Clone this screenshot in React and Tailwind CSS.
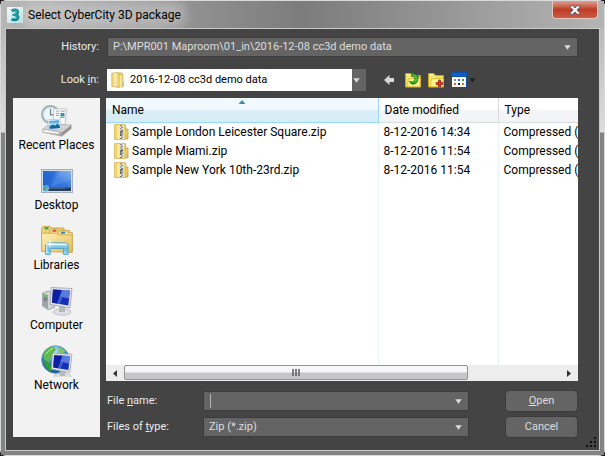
import React from "react";

const files = [
  { name: "Sample London Leicester Square.zip", date: "8-12-2016 14:34" },
  { name: "Sample Miami.zip", date: "8-12-2016 11:54" },
  { name: "Sample New York 10th-23rd.zip", date: "8-12-2016 11:54" },
];

function AppLogo() {
  return (
    <svg width="16" height="16" viewBox="0 0 16 16" aria-hidden="true" className="shrink-0">
      <defs>
        <linearGradient id="logoBg" x1="0" y1="0" x2="1" y2="1">
          <stop offset="0" stopColor="#f4fbfb" />
          <stop offset="1" stopColor="#b9dcde" />
        </linearGradient>
      </defs>
      <rect width="16" height="16" fill="url(#logoBg)" />
      <path d="M4.6 4 Q8 2.200 10.200 3.800 Q11.600 5.800 8.200 7.700 Q12.200 9 10.600 11.500 Q8 13.600 4.600 12" fill="none" stroke="#0c7f88" strokeWidth="3" />
      <path d="M5 3.700 Q8 2.200 9.800 3.800 Q11 5.600 7 7.400 Q11.400 8.600 10 11 Q8 12.600 5 11.500" fill="none" stroke="#27b0b2" strokeWidth="1.200" />
    </svg>
  );
}

function FolderIcon() {
  return (
    <svg width="14" height="16" viewBox="0 0 14 16" aria-hidden="true" className="shrink-0">
      <defs>
        <linearGradient id="folderFill" x1="0" y1="0" x2="1" y2="0">
          <stop offset="0" stopColor="#e9cf72" />
          <stop offset="0.5" stopColor="#fbf0b0" />
          <stop offset="1" stopColor="#e4c35c" />
        </linearGradient>
      </defs>
      <path d="M5 1h6l1 2v12H5z" fill="#e8cb69" stroke="#c9a545" strokeWidth=".6" />
      <path d="M.8 1.2 7.6.6 8.4 2v13.4L.8 14.4z" fill="url(#folderFill)" stroke="#d0ae4d" strokeWidth=".7" />
      <path d="M8.4 3.4h2.8v10.8l-2.8 1.2z" fill="#f6e394" />
      <path d="M11.6 10v4h1.5v-4z" fill="#8fc4e4" />
    </svg>
  );
}

function ZipIcon() {
  return (
    <svg width="15" height="16" viewBox="0 0 15 16" aria-hidden="true" className="shrink-0">
      <path d="M8 1.4h3.4V5H14v10H8z" fill="#edcf68" stroke="#c79f3a" strokeWidth=".8" />
      <path d="M.6.6h10.6v14.8H.6z" fill="#fbe897" stroke="#cfab48" strokeWidth=".8" />
      <path d="M1.2 1.2h2v13.6h-2z" fill="#f1d36f" />
      <path d="M9.2 4.8h1.9v9.8H9.2z" fill="#f0d271" />
      <rect x="5.6" y="1" width="3.6" height="14" fill="#e4e4e1" />
      <path d="M6 1.7h1.8M7.2 3.3H9M6 4.9h1.8M7.2 6.5H9M6 11.5h1.8M7.2 13.2H9M6 14.5h1.8" stroke="#6a6f76" strokeWidth="1" />
      <rect x="6.2" y="7" width="2.3" height="4.4" fill="#4f5660" />
      <rect x="7" y="8.7" width=".8" height="1.8" fill="#d8d8d8" />
      <rect x="12.8" y="11" width="1.2" height="3" fill="#80bfe0" />
    </svg>
  );
}

function Triangle({ color = "#dcdcdc" }) {
  return (
    <svg width="7" height="5" viewBox="0 0 7 5" aria-hidden="true" className="shrink-0">
      <path d="M.3.2h6.4L3.5 4.8z" fill={color} />
    </svg>
  );
}

function BackIcon() {
  return (
    <svg width="10" height="10" viewBox="0 0 10 10" aria-hidden="true">
      <path d="M5.5 0v3H10v4H5.5v3L0 5z" fill="#d8d8d8" />
    </svg>
  );
}

function YellowFolder() {
  return (
    <g>
      <path d="M.5 15V1.500h5.500l1 2H15.500V15z" fill="#f8e061" stroke="#c9a417" />
      <path d="M2 5.500h4.200l1.300-2M1.500 2.700H5" fill="none" stroke="#fff8b8" />
      <path d="M1.800 14.700 3.800 6.500h11.400v8.200z" fill="#fff18b" stroke="#d6b32d" strokeWidth=".7" />
    </g>
  );
}

function UpFolderIcon() {
  return (
    <svg width="16" height="16" viewBox="0 0 16 16" aria-hidden="true">
      <YellowFolder />
      <path d="M4.500 9.400Q5.600 12.800 9 12.200Q13.600 11 12.600 4.800h1.600L9.300 2.800 7.300.6 5.800.8 7.600 3.200 6.200 4.200 9.600 4.400Q10.400 8.600 8.600 9.600Q6.600 10.400 4.500 9.400z" fill="#35ae2c" stroke="#13731a" strokeWidth=".8" />
      <path d="M8.600 2.600Q12.600 4.600 10.600 9.400" fill="none" stroke="#5fc945" strokeWidth="1.200" />
    </svg>
  );
}

function NewFolderIcon() {
  return (
    <svg width="16" height="16" viewBox="0 0 16 16" aria-hidden="true">
      <YellowFolder />
      <path d="M11.500 8v7M8 11.500h7" stroke="#7a1712" strokeWidth="2.600" />
      <path d="M11.500 7.500v8M7.500 11.500h8" stroke="#f0301d" strokeWidth="1.300" />
    </svg>
  );
}

function ViewIcon() {
  return (
    <svg width="16" height="16" viewBox="0 0 16 16" aria-hidden="true">
      <rect width="16" height="16" fill="#0a4fa5" />
      <rect x="1" y="1" width="14" height="3" fill="#0d63cb" />
      <path d="M10 2.500h1M12 2.500h1M14 2.500h1" stroke="#0a3b82" />
      <rect x="1" y="5" width="14" height="10" fill="#fff" />
      <path d="M3 7h2v2H3z" fill="#8588b5" />
      <path d="M7 7h2v2H7z" fill="#2469d1" />
      <path d="M11 7h2v2h-2z" fill="#29a12c" />
      <path d="M3 11h2v2H3z" fill="#ee5c2b" />
      <path d="M7 11h2v2H7z" fill="#1a2291" />
      <path d="M11 11h2v2h-2z" fill="#c58a1d" />
    </svg>
  );
}

function RecentIcon() {
  return (
    <svg width="32" height="32" viewBox="0 0 32 32" aria-hidden="true">
      <defs>
        <linearGradient id="trayFill" x1="0" y1="0" x2="1" y2="1">
          <stop offset="0" stopColor="#f6f6f6" />
          <stop offset="1" stopColor="#9a9a9a" />
        </linearGradient>
        <linearGradient id="photoFill" x1="0" y1="0" x2="0" y2="1">
          <stop offset="0" stopColor="#2a8fdd" />
          <stop offset=".5" stopColor="#b3e1f5" />
          <stop offset="1" stopColor="#1b6fae" />
        </linearGradient>
      </defs>
      <circle cx="9.5" cy="9.5" r="8.6" fill="#dce8ee" stroke="#98aab4" strokeWidth="1.6" />
      <circle cx="9.5" cy="9.5" r="6.7" fill="#eef7fa" stroke="#b9c9d2" strokeWidth=".6" />
      <path d="M9.5 4v5.8h5" fill="none" stroke="#6b7f8c" strokeWidth="1.2" />
      <path d="M13 3.5 25.6 4 24 20 12 19z" fill="#fafafa" stroke="#b1b1b1" strokeWidth=".7" />
      <path d="M15 6h3M19.5 6.2h4.3M15 8.4h3M15 10.5h3M19 12.5h4.5" stroke="#9ba5ac" />
      <path d="M19.5 8h4v3.5h-4z" fill="#3a93ad" />
      <path d="M2 24 9 18.500 30.500 20 21 28z" fill="#d4d4d4" stroke="#a5a5a5" strokeWidth=".6" />
      <path d="M6.5 15 19 14 20 24 8 25z" fill="#fff" stroke="#9badb7" strokeWidth=".6" />
      <path d="M7.7 16 18 15.2l.9 7.8-10.1.8z" fill="url(#photoFill)" />
      <path d="m8.6 21.5 3.4-2 2.2 1.3 2.3-2.3 2.2 2.2.2 2.3-10.1.8z" fill="#126699" />
      <path d="M1.5 24 21 27.300v4L1.500 27.300z" fill="url(#trayFill)" stroke="#a3a3a3" strokeWidth=".6" />
      <path d="m21 27.300 9.500-7.300v3.800L21 31.300z" fill="#969696" />
      <path d="m4 25.800 14 2.400" stroke="#fff" strokeWidth="1.2" />
    </svg>
  );
}

function DesktopIcon() {
  return (
    <svg width="32" height="32" viewBox="0 0 32 32" aria-hidden="true">
      <defs>
        <linearGradient id="deskFill" x1="0" y1="1" x2="1" y2="0">
          <stop offset="0" stopColor="#1f5fce" />
          <stop offset=".55" stopColor="#3577de" />
          <stop offset="1" stopColor="#7aabea" />
        </linearGradient>
      </defs>
      <rect x=".5" y="4.5" width="31" height="23" fill="#d4dce6" stroke="#a3afbd" />
      <rect x="2" y="6" width="28" height="20" fill="url(#deskFill)" />
      <path d="M2 6h14L5 22H2z" fill="#1659c8" opacity=".4" />
      <path d="M19 6h11v9L9 22z" fill="#b2d6ff" opacity=".15" />
      <rect x="2" y="22.5" width="28" height="3.5" fill="#263d5d" />
      <path d="M8 23h16" stroke="#60799b" />
      <circle cx="4.8" cy="23.4" r="2.9" fill="#1796cf" stroke="#b3e2f2" strokeWidth=".6" />
      <path d="M3.2 22h1.5v1.5H3.2z" fill="#ef6f31" />
      <path d="M5 22h1.5v1.5H5z" fill="#8acb3a" />
      <path d="M5 23.7h1.5v1.4H5z" fill="#f3cb35" />
    </svg>
  );
}

function LibrariesIcon() {
  return (
    <svg width="32" height="32" viewBox="0 0 32 32" aria-hidden="true">
      <defs>
        <linearGradient id="libFill" x1="0" y1="0" x2="1" y2="1">
          <stop offset="0" stopColor="#fff3b8" />
          <stop offset="1" stopColor="#e3bb55" />
        </linearGradient>
        <linearGradient id="libStand" x1="0" y1="0" x2="0" y2="1">
          <stop offset="0" stopColor="#c8edfb" />
          <stop offset=".5" stopColor="#62b8df" />
          <stop offset="1" stopColor="#a6def4" />
        </linearGradient>
      </defs>
      <path d="M.7 26V3l1.3-1.7h7L10.3 3H23v22z" fill="#efd379" stroke="#c39e46" strokeWidth=".8" />
      <rect x="3.5" y="2.3" width="4" height="2" fill="#20a532" />
      <path d="M9 25V5.2l1.2-1.6h7l1.3 1.8h10V25z" fill="#f4dd8d" stroke="#c39e46" strokeWidth=".8" />
      <rect x="11.5" y="4.7" width="4" height="2" fill="#d8482b" />
      <path d="M17 26V7.2l1.2-1.6h7.2l1.3 1.8h4.6V27z" fill="#f6df8d" stroke="#c39e46" strokeWidth=".8" />
      <rect x="20" y="6.7" width="4" height="2" fill="#258bc7" />
      <path d="M.7 8.2h15l1.6 1.7h14v17.5L.7 26.5z" fill="url(#libFill)" stroke="#c9a54d" strokeWidth=".8" />
      <path d="M4.5 29.500V19.700l2-2h18.700l2 2v9.800h-4.800v-6H9.300v6z" fill="url(#libStand)" stroke="#4a9ec6" strokeWidth=".8" />
      <path d="M6 19.5h19.5M5.8 21v7" stroke="#e9faff" />
      <path d="m9 13 .8 5 5.2.8-5.2.8-.8 5-.8-5-5.2-.8 5.2-.8z" fill="#fff" opacity=".85" />
    </svg>
  );
}

function MonitorShapes() {
  return (
    <g>
      <ellipse cx="21" cy="27" rx="9" ry="3.200" fill="#dfe1e3" stroke="#b1b5b9" strokeWidth=".7" />
      <path d="m18 20 6 1v6h-6z" fill="#b4b9be" />
      <path d="M10.2 2.5 31 3.5 29 23 9 19.5z" fill="#e2e4e6" stroke="#9d9fa3" strokeWidth=".8" />
      <path d="m12 4.6 17 .9-1.7 15-16.4-2.8z" fill="#1630b8" />
      <path d="m12 4.6 9 .5-5 13.4-5-.9z" fill="#0b1a98" opacity=".75" />
      <path d="m21 5.1 8 .4-1 8-9-2z" fill="#83a4f1" opacity=".65" />
      <path d="m21 5.1 3 .1-5 13.8-3-.5z" fill="#4e78df" opacity=".65" />
    </g>
  );
}

function ComputerIcon() {
  return (
    <svg width="32" height="32" viewBox="0 0 32 32" aria-hidden="true">
      <path d="M1.5 8 7.5 6l6 2v14.5L7 24.7 1.5 21z" fill="#d2d5d7" stroke="#94989b" strokeWidth=".8" />
      <path d="M2 8.5 7 10v14l-5-3.3z" fill="#9ea3a7" />
      <path d="M3 13h3M3 15h3" stroke="#5c6368" />
      <rect x="3" y="9.5" width="2.4" height="2" fill="#4ce23f" />
      <MonitorShapes />
    </svg>
  );
}

function NetworkIcon() {
  return (
    <svg width="32" height="32" viewBox="0 0 32 32" aria-hidden="true">
      <defs>
        <radialGradient id="globeFill" cx=".45" cy=".2" r=".85">
          <stop offset="0" stopColor="#c4e9f8" />
          <stop offset=".5" stopColor="#2f8cc9" />
          <stop offset="1" stopColor="#0b4c99" />
        </radialGradient>
      </defs>
      <circle cx="14.5" cy="14.5" r="13.8" fill="url(#globeFill)" stroke="#5c8ead" strokeWidth=".8" />
      <path d="M3 8Q7 2 13 1.6L15 5l-3 3 1 4-4 1-1 5-4-3-2-3z" fill="#61b84b" />
      <path d="m2 16 6 2 3 5-1 4-4-3z" fill="#339e2e" />
      <path d="m18 2 7 4-4 3-4-2z" fill="#82c66a" />
      <path d="M4.5 9.5Q8 5 12 3" fill="none" stroke="#c5ed9f" />
      <g transform="translate(2 6) scale(.93)">
        <MonitorShapes />
      </g>
    </svg>
  );
}

const places = [
  { label: "Recent Places", Icon: RecentIcon },
  { label: "Desktop", Icon: DesktopIcon },
  { label: "Libraries", Icon: LibrariesIcon },
  { label: "Computer", Icon: ComputerIcon },
  { label: "Network", Icon: NetworkIcon },
];

const field =
  "flex h-5 items-center border border-[#3b3b3b] bg-[#646464] text-[#dedede]";
const bareSelect =
  "h-full min-w-0 flex-1 appearance-none bg-transparent outline-none";
const pushButton =
  "h-[22px] w-full rounded-sm border border-[#3b3b3b] bg-[#646464] text-[#dedede]";

function TitleBar() {
  return (
    <header className="flex h-[27px] items-start bg-linear-to-r from-[#b6b6b6] via-[#7c7c7c] to-[#b4b4b4] pr-1.5 pl-1.5">
      <div className="flex h-[27px] flex-1 items-center gap-[5px]">
        <AppLogo />
        <h1 className="rounded-full bg-white/25 text-[12px] leading-4 text-black shadow-[0_0_10px_6px_rgba(255,255,255,0.25)]">
          Select CyberCity 3D package
        </h1>
      </div>
      <button
        type="button"
        aria-label="Close"
        className="flex h-[18px] w-[46px] items-center justify-center rounded-b-[4px] border border-t-0 border-[#e5c8c3] bg-linear-to-b from-[#dd9f93] via-[#bd3b25] via-50% to-[#cc5b43]"
      >
        <svg width="12" height="10" viewBox="0 0 12 10" aria-hidden="true">
          <path d="M1 .7h3L6 3l2-2.3h3v1L8 5l3 3.3v1H8L6 7 4 9.300H1v-1L4 5 1 1.700z" fill="#f5f5f5" stroke="#525563" strokeWidth=".9" />
        </svg>
      </button>
    </header>
  );
}

function FileList() {
  return (
    <section className="flex min-w-0 flex-1 flex-col overflow-hidden bg-white text-[12px] text-black">
      <table className="w-full flex-1 table-fixed border-collapse text-left">
        <colgroup>
          <col />
          <col className="w-[120px]" />
          <col className="w-[80px]" />
        </colgroup>
        <thead>
          <tr className="h-6">
            <th className="relative border-r border-b border-[#96d9f9] bg-linear-to-b from-[#f2f9fc] from-45% to-[#d8ecf6] to-55% p-0 pl-1.5 font-normal">
              Name
              <svg width="7" height="4" viewBox="0 0 7 4" aria-hidden="true" className="absolute top-0.5 left-1/2 -translate-x-1/2">
                <path d="M0 4 3.500 0 7 4z" fill="#4a88a8" />
              </svg>
            </th>
            <th className="border-r border-b border-[#d8dce0] bg-linear-to-b from-white from-45% to-[#f3f4f6] to-55% p-0 pl-1.5 font-normal">
              Date modified
            </th>
            <th className="border-b border-[#d8dce0] bg-linear-to-b from-white from-45% to-[#f3f4f6] to-55% p-0 pl-1.5 font-normal">
              Type
            </th>
          </tr>
        </thead>
        <tbody>
          {files.map((f) => (
            <tr key={f.name} className="h-[19px]">
              <td className="border-r border-[#edf3fa] p-0 pl-2">
                <span className="flex items-center gap-[3px] whitespace-nowrap">
                  <ZipIcon />
                  {f.name}
                </span>
              </td>
              <td className="border-r border-[#edf3fa] p-0 pl-[5px] whitespace-nowrap">{f.date}</td>
              <td className="overflow-hidden p-0 pl-[5px] whitespace-nowrap">Compressed (</td>
            </tr>
          ))}
          <tr className="h-[184px]">
            <td className="border-r border-[#edf3fa]" />
            <td className="border-r border-[#edf3fa]" />
            <td />
          </tr>
        </tbody>
      </table>
      <div className="flex h-4 items-center bg-[#ededed]">
        <button type="button" aria-label="Scroll left" className="flex h-full w-[18px] items-center justify-center">
          <svg width="4" height="7" viewBox="0 0 4 7" aria-hidden="true">
            <path d="M4 0v7L0 3.500z" fill="#333" />
          </svg>
        </button>
        <div className="flex h-full min-w-0 flex-1">
          <div className="flex h-[15px] w-[79%] items-center justify-center gap-px rounded-xs border border-[#929292] bg-linear-to-b from-[#f7f7f7] from-45% to-[#c6c6ca] to-55%">
            <svg width="8" height="7" viewBox="0 0 8 7" aria-hidden="true">
              <path d="M1 0v7M4 0v7M7 0v7" stroke="#5c5c5c" strokeWidth="1.500" />
            </svg>
          </div>
        </div>
        <button type="button" aria-label="Scroll right" className="flex h-full w-[18px] items-center justify-center">
          <svg width="4" height="7" viewBox="0 0 4 7" aria-hidden="true">
            <path d="M0 0v7l4-3.500z" fill="#333" />
          </svg>
        </button>
      </div>
    </section>
  );
}

function ResizeGrip() {
  return (
    <svg width="11" height="11" viewBox="0 0 11 11" aria-hidden="true" className="absolute right-0.5 bottom-0.5">
      <path d="M8 0h2v2H8zM4 4h2v2H4zM8 4h2v2H8zM0 8h2v2H0zM4 8h2v2H4zM8 8h2v2H8z" fill="#101010" />
    </svg>
  );
}

export default function App() {
  return (
    <div className="flex min-h-screen w-full bg-[#1b1b1b] font-[Roboto,'Liberation_Sans',sans-serif] text-[11px] leading-4">
      <div className="flex flex-1 flex-col rounded-md border border-[#d9d9d9] bg-[#828484]">
        <TitleBar />
        <div className="flex flex-1 bg-linear-to-b from-[#b9b9b9] from-0% via-[#dedede] via-[104px] to-[#828484] to-[105px] px-1 pb-1">
          <main className="relative flex flex-1 flex-col border border-[#c9c9c9] bg-[#444444] pt-2 text-[#ececec]">
            <div className="flex items-center gap-2 pr-[21px] pl-2">
              <label htmlFor="history" className="w-[85px] shrink-0 text-right">
                History:
              </label>
              <div className={`${field} flex-1 pr-1.5 pl-[5px]`}>
                <select id="history" className={bareSelect}>
                  <option>P:\MPR001 Maproom\01_in\2016-12-08 cc3d demo data</option>
                </select>
                <Triangle />
              </div>
            </div>

            <div className="mt-3 flex items-center gap-2 pr-[21px] pl-2">
              <label htmlFor="lookin" className="w-[85px] shrink-0 text-right">
                Look <u>i</u>n:
              </label>
              <div className="flex h-[22px] w-[259px] bg-[#646464]">
                <div className="flex flex-1 items-center gap-[5px] bg-white pl-1 text-black">
                  <FolderIcon />
                  <select id="lookin" className={bareSelect}>
                    <option>2016-12-08 cc3d demo data</option>
                  </select>
                </div>
                <div className="flex w-3.5 items-center pl-px">
                  <Triangle />
                </div>
              </div>
              <div className="ml-2.5 flex items-center gap-[7px]">
                <button type="button" aria-label="Back" className="flex w-3.5 items-center">
                  <BackIcon />
                </button>
                <button type="button" aria-label="Up one level">
                  <UpFolderIcon />
                </button>
                <button type="button" aria-label="Create new folder">
                  <NewFolderIcon />
                </button>
                <button type="button" aria-label="View menu" className="flex items-center gap-0.5">
                  <ViewIcon />
                  <Triangle color="#252525" />
                </button>
              </div>
            </div>

            <div className="mt-[7px] flex flex-1 gap-1.5 pr-[21px] pl-[7px]">
              <nav className="mb-[13px] flex w-[87px] shrink-0 flex-col gap-2 bg-[#f2f2f2] pt-[7px] text-[12px] text-black">
                {places.map(({ label, Icon }) => (
                  <button key={label} type="button" className="flex h-[52px] flex-col items-center whitespace-nowrap">
                    <Icon />
                    <span>{label}</span>
                  </button>
                ))}
              </nav>
              <div className="flex min-w-0 flex-1 flex-col">
                <FileList />
                <div className="mt-[9px] mb-3 grid grid-cols-[88px_1fr_73px] items-center gap-x-2 gap-y-1 pl-px">
                  <label htmlFor="filename">
                    File <u>n</u>ame:
                  </label>
                  <div className={`${field} mr-7 pr-1.5 pl-1.5`}>
                    <span className="h-3.5 w-px bg-[#b4b4b4]" />
                    <input id="filename" type="text" className="h-full min-w-0 flex-1 bg-transparent outline-none" />
                    <Triangle />
                  </div>
                  <button type="button" className={pushButton}>
                    <u>O</u>pen
                  </button>
                  <label htmlFor="filetype">
                    Files of <u>t</u>ype:
                  </label>
                  <div className={`${field} mr-7 pr-1.5 pl-[5px]`}>
                    <select id="filetype" className={bareSelect}>
                      <option>Zip (*.zip)</option>
                    </select>
                    <Triangle />
                  </div>
                  <button type="button" className={pushButton}>
                    Cancel
                  </button>
                </div>
              </div>
            </div>
            <ResizeGrip />
          </main>
        </div>
      </div>
    </div>
  );
}
